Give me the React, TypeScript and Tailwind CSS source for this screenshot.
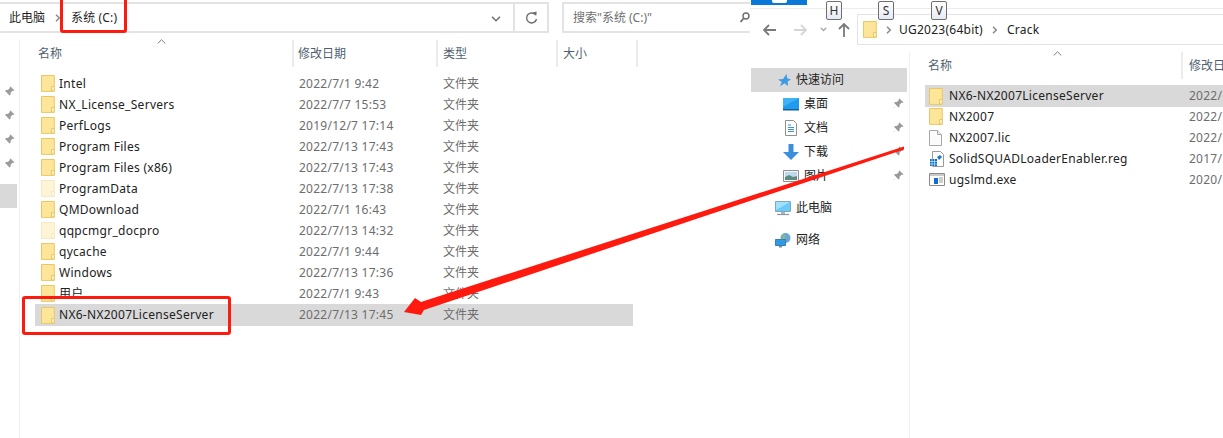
import React from "react";

const FONT = "[font-family:'Noto_Sans','Noto_Sans_CJK_SC',sans-serif]";

function Folder({ faded = false }: { faded?: boolean }) {
  return (
    <svg width="14" height="17" viewBox="0 0 14 17" className={faded ? "opacity-40 shrink-0" : "shrink-0"}>
      <path d="M.5.5h12.8v15.9H.5z" fill="#fde69a" stroke="#e9c766" />
      <path d="M10.5 16V11.5h2.8V16z" fill="#fff3c4" stroke="#e9c766" />
    </svg>
  );
}

function FileIcon() {
  return (
    <svg width="13" height="16" viewBox="0 0 13 16" className="shrink-0">
      <path d="M.5.5h8l4 4v11H.5z" fill="#fbfbfb" stroke="#a8a8a8" />
      <path d="M8.5.5v4h4" fill="#eee" stroke="#a8a8a8" />
    </svg>
  );
}

function RegIcon() {
  return (
    <svg width="16" height="16" viewBox="0 0 16 16" className="shrink-0">
      <path d="M3.5.5h8l3 3v12h-11z" fill="#fff" stroke="#9a9a9a" />
      <path d="M8 6l3-2 2 2-3 3z" fill="#1c78c8" />
      <path d="M1 8h7v7H1z" fill="#0f6cbd" />
      <path d="M3 8v7M5.500 8v7M1 10.500h7M1 13h7" stroke="#cfe6f8" strokeWidth=".7" />
    </svg>
  );
}

function ExeIcon() {
  return (
    <svg width="16" height="13" viewBox="0 0 16 13" className="shrink-0">
      <path d="M.5.500h15v12H.5z" fill="#fff" stroke="#8a8a8a" />
      <path d="M1 1h14v2H1z" fill="#c9c9c9" />
      <path d="M5 5h4v6H5z" fill="#0f6cd0" />
      <path d="M10 5h4M10 7h4M10 9h4" stroke="#9a9a9a" />
    </svg>
  );
}

function Pin() {
  return (
    <svg width="11" height="11" viewBox="0 0 11 11" className="shrink-0">
      <path d="M6.500.5l4 4-1 .6-1-.3-2 2 .1 2-.9.8L3.300 7.200.7 10.300l-.2-.2 3-2.800L1.100 4.900l.8-.9 2 .1 2-2-.2-1z" fill="#9a9a9a" />
    </svg>
  );
}

function Chevron() {
  return (
    <svg width="6" height="8" viewBox="0 0 6 8" className="shrink-0">
      <path d="M1 .8L4.300 4 1 7.200" fill="none" stroke="#8a8a8a" strokeWidth="1.500" />
    </svg>
  );
}

function Caret() {
  return (
    <svg width="9" height="5" viewBox="0 0 9 5" className="shrink-0">
      <path d="M.7 4.500L4.500.8l3.800 3.700" fill="none" stroke="#7a7a7a" strokeWidth="1" />
    </svg>
  );
}

const leftRows: [string, string, boolean?][] = [
  ["Intel", "2022/7/1 9:42"],
  ["NX_License_Servers", "2022/7/7 15:53"],
  ["PerfLogs", "2019/12/7 17:14"],
  ["Program Files", "2022/7/13 17:43"],
  ["Program Files (x86)", "2022/7/13 17:43"],
  ["ProgramData", "2022/7/13 17:38", true],
  ["QMDownload", "2022/7/1 16:43"],
  ["qqpcmgr_docpro", "2022/7/13 14:32", true],
  ["qycache", "2022/7/1 9:44"],
  ["Windows", "2022/7/13 17:36"],
  ["用户", "2022/7/1 9:43"],
];

function LeftPane() {
  return (
    <div className="w-[750px] shrink-0 h-full flex flex-col">
      <div className="mt-[2px] h-[31px] flex border-t-2 border-b-2 border-[#e3e3e3] shrink-0">
        <div className="w-[515px] flex items-center pl-[9px] text-[12px] text-[#1f1f1f] border-r-2 border-[#e3e3e3] relative">
          <span>此电脑</span>
          <span className="ml-[10px] mr-[10px]"><Chevron /></span>
          <span className="tracking-[0.15px]">系统 (C:)</span>
          <svg width="10" height="6" viewBox="0 0 10 6" className="absolute right-[12px] top-[12px]">
            <path d="M1 .8l4 4 4-4" fill="none" stroke="#6f6f6f" strokeWidth="1.500" />
          </svg>
        </div>
        <div className="w-[34px] flex items-center justify-center border-r-2 border-[#e3e3e3]">
          <svg width="13" height="14" viewBox="0 0 13 14">
            <path d="M10.800 4.200A5 5 0 1 0 11.500 8" fill="none" stroke="#6f6f6f" strokeWidth="1.400" />
            <path d="M7.500 1.500l3.800 3 .4-4z" fill="#6f6f6f" />
          </svg>
        </div>
        <div className="w-[13px] bg-white -my-[2px]" />
        <div className="flex-1 border-l-2 border-[#e3e3e3] flex items-center pl-[9px] text-[12px] text-[#6f6f6f] relative">
          <span>搜索"系统 (C:)"</span>
          <svg width="10" height="12" viewBox="0 0 10 12" className="absolute right-0 top-[8px]">
            <circle cx="6" cy="4" r="3" fill="none" stroke="#6f6f6f" strokeWidth="1.400" />
            <path d="M3.500 6.500L.5 10" stroke="#6f6f6f" strokeWidth="1.800" />
          </svg>
        </div>
      </div>
      <div className="flex flex-1 pt-[7px]">
        <div className="w-[20px] shrink-0 border-r border-[#f0f0f0] flex flex-col">
          <div className="flex flex-col gap-[13px] pl-[4px] pt-[46px]">
            <Pin /><Pin /><Pin /><Pin />
          </div>
          <div className="mt-[15px] h-[24px] w-[17px] bg-[#d9d9d9]" />
        </div>
        <div className="flex-1 flex flex-col">
          <div className="h-[27px] flex text-[12px] text-[#4f5f70] relative shrink-0">
            <span className="absolute left-[137px] -top-[1px]"><Caret /></span>
            <div className="w-[274px] border-r-2 border-[#ececec] pl-[18px] flex items-center">名称</div>
            <div className="w-[144px] border-r-2 border-[#ececec] pl-[4px] flex items-center">修改日期</div>
            <div className="w-[120px] border-r-2 border-[#ececec] pl-[5px] flex items-center">类型</div>
            <div className="w-[80px] border-r-2 border-[#ececec] pl-[5px] flex items-center">大小</div>
          </div>
          <div className="flex flex-col pt-[6px] pl-[15px]">
            {leftRows.map(([name, date, faded]) => (
              <div key={name} className="h-[21px] flex items-center text-[12px]">
                <div className="w-[257px] flex items-center pl-[6px] gap-[4px] text-[#222]">
                  <Folder faded={faded} />
                  <span className="tracking-[0.28px]">{name}</span>
                </div>
                <div className="w-[151px] pl-[7px] text-[#6d6d6d] tracking-[0.25px]">{date}</div>
                <div className="text-[#6d6d6d]">文件夹</div>
              </div>
            ))}
            <div className="h-[22px] w-[598px] bg-[#d9d9d9] flex items-center text-[12px]">
              <div className="w-[257px] flex items-center pl-[6px] gap-[4px] text-[#222]">
                <Folder />
                <span className="tracking-[0.28px]">NX6-NX2007LicenseServer</span>
              </div>
              <div className="w-[151px] pl-[7px] text-[#6d6d6d] tracking-[0.25px]">2022/7/13 17:45</div>
              <div className="text-[#6d6d6d]">文件夹</div>
            </div>
          </div>
        </div>
      </div>
    </div>
  );
}

const rightRows: [React.ReactNode, string, string][] = [
  [<Folder />, "NX6-NX2007LicenseServer", "2022/"],
  [<Folder />, "NX2007", "2022/"],
  [<FileIcon />, "NX2007.lic", "2022/"],
  [<RegIcon />, "SolidSQUADLoaderEnabler.reg", "2017/"],
  [<ExeIcon />, "ugslmd.exe", "2020/"],
];

function Monitor() {
  return (
    <svg width="16" height="13" viewBox="0 0 16 13">
      <path d="M0 0h16v11H0z" fill="#1e9bf0" />
      <path d="M0 0h16L0 9z" fill="#3db2f7" />
      <path d="M0 11h16v1.500H0z" fill="#155e96" />
    </svg>
  );
}
function Doc() {
  return (
    <svg width="12" height="16" viewBox="0 0 12 16">
      <path d="M.5.500h8l3 3v12H.5z" fill="#fff" stroke="#8f8f8f" />
      <path d="M3 5h3M3 7.500h6M3 9.500h6M3 11.500h6" stroke="#3f8fd0" />
    </svg>
  );
}
function Down() {
  return (
    <svg width="16" height="16" viewBox="0 0 16 16">
      <path d="M5.500 0h5v8H16l-8 8-8-8h5.500z" fill="#3a8fdc" />
    </svg>
  );
}
function Pic() {
  return (
    <svg width="16" height="12" viewBox="0 0 16 12">
      <path d="M.5.500h15v11H.5z" fill="#f4f7fa" stroke="#8f8f8f" />
      <path d="M2 2h12v5H2z" fill="#bcd9ee" />
      <path d="M2 7l4-2 4 2 4-1v4H2z" fill="#5e8a80" />
    </svg>
  );
}
function Computer() {
  return (
    <svg width="16" height="15" viewBox="0 0 16 15">
      <path d="M.5.500h15v10H.5z" fill="#6ccaf6" stroke="#7fa8c0" />
      <path d="M1 1h14L1 9z" fill="#9fe0fb" />
      <path d="M6 11h4v2H6z" fill="#b0b8bf" />
      <path d="M2 13.500h12" stroke="#8a949c" strokeWidth="1.200" />
    </svg>
  );
}
function Network() {
  return (
    <svg width="17" height="15" viewBox="0 0 17 15">
      <circle cx="10.500" cy="5" r="5" fill="#6aa6d8" />
      <path d="M8 1c2 1 3 2 2 4s-3 1-4 2" fill="#7fbf7a" />
      <path d="M.5 6.500h10v6H.5z" fill="#2e9be6" stroke="#3d7db0" />
      <path d="M4 13h3v1.500H4z" fill="#7a8a96" />
    </svg>
  );
}
function Star() {
  return (
    <svg width="13" height="13" viewBox="0 0 13 13">
      <path d="M8.500 0l.7 4.200L13 5.500l-3.300 2 .3 4.500-3.500-2.800L2 12.500l1.800-4.500L0 5.500l5-.5z" fill="#3f9be0" />
    </svg>
  );
}

const quick: [React.ReactNode, string][] = [
  [<Monitor />, "桌面"],
  [<Doc />, "文档"],
  [<Down />, "下载"],
  [<Pic />, "图片"],
];

function KeyTip({ k }: { k: string }) {
  return (
    <div className="w-[16px] h-[19px] border border-[#6f6f6f] rounded-[2px] bg-gradient-to-b from-white to-[#e6eaf4] text-[12px] text-[#333] flex items-center justify-center leading-none">
      {k}
    </div>
  );
}

function RightPane() {
  return (
    <div className="flex-1 h-full flex flex-col relative">
      <div className="h-[9px] shrink-0 border-b border-[#ececec]">
        <div className="ml-[1px] w-[56px] h-[5px] bg-[#0a78d6] relative">
          <div className="absolute left-[21px] top-0 w-[15px] h-[3px] bg-white rounded-b-[2px]" />
        </div>
      </div>
      <div className="h-[31px] mt-[5px] shrink-0 flex">
        <div className="w-[107px] shrink-0 flex items-center text-[#7a7a7a] relative">
          <svg width="14" height="12" viewBox="0 0 14 12" className="absolute left-[13px] top-[10px]">
            <path d="M6 1L1 6l5 5M1 6h12" fill="none" stroke="#7a7a7a" strokeWidth="1.800" />
          </svg>
          <svg width="14" height="12" viewBox="0 0 14 12" className="absolute left-[43px] top-[10px]">
            <path d="M8 1l5 5-5 5M13 6H1" fill="none" stroke="#d5d5d5" strokeWidth="1.800" />
          </svg>
          <svg width="7" height="5" viewBox="0 0 7 5" className="absolute left-[70px] top-[13px]">
            <path d="M.8.800L3.500 3.500 6.200.800" fill="none" stroke="#a5a5a5" strokeWidth="1.300" />
          </svg>
          <svg width="12" height="14" viewBox="0 0 12 14" className="absolute left-[88px] top-[9px]">
            <path d="M1 6l5-5 5 5M6 1v13" fill="none" stroke="#7a7a7a" strokeWidth="1.800" />
          </svg>
        </div>
        <div className="flex-1 border-t border-b border-l border-[#e3e3e3] flex items-center pl-[5px] text-[12px] text-[#222] tracking-[0.25px]">
          <Folder />
          <span className="ml-[9px] mr-[7px]"><Chevron /></span>
          <span>UG2023(64bit)</span>
          <span className="ml-[9px] mr-[9px]"><Chevron /></span>
          <span>Crack</span>
        </div>
      </div>
      <div className="flex flex-1 pt-[7px]">
        <div className="w-[160px] shrink-0 border-r border-[#f0f0f0] flex flex-col text-[12px] text-[#222]">
          <div className="mt-[16px] ml-[1px] w-[156px] h-[24px] bg-[#d9d9d9] flex items-center pl-[27px] gap-[5px]">
            <Star />
            <span>快速访问</span>
          </div>
          <div className="flex flex-col">
            {quick.map(([icon, label]) => (
              <div key={label} className="h-[24px] flex items-center relative">
                <div className="w-[16px] ml-[33px] flex justify-center">{icon}</div>
                <span className="ml-[5px]">{label}</span>
                <span className="absolute left-[143px] top-[6px]"><Pin /></span>
              </div>
            ))}
          </div>
          <div className="h-[24px] mt-[8px] flex items-center pl-[25px] gap-[5px]">
            <Computer />
            <span>此电脑</span>
          </div>
          <div className="h-[24px] mt-[8px] flex items-center pl-[25px] gap-[4px]">
            <Network />
            <span>网络</span>
          </div>
        </div>
        <div className="flex-1 flex flex-col pl-[15px] min-w-0">
          <div className="h-[27px] flex text-[12px] text-[#4f5f70] relative shrink-0">
            <span className="absolute left-[128px] -top-[1px]"><Caret /></span>
            <div className="w-[258px] shrink-0 border-r-2 border-[#ececec] pl-[3px] flex items-center">名称</div>
            <div className="pl-[6px] flex items-center whitespace-nowrap">修改日期</div>
          </div>
          <div className="flex flex-col pt-[6px] text-[12px]">
            {rightRows.map(([icon, name, date], i) => (
              <div key={name} className={i === 0 ? "h-[22px] -mb-[1px] flex items-center bg-[#d9d9d9]" : "h-[21px] flex items-center"}>
                <div className="w-[264px] shrink-0 flex items-center text-[#222]">
                  <div className="w-[24px] pl-[4px] flex items-center">{icon}</div>
                  <span className="tracking-[0.28px]">{name}</span>
                </div>
                <div className="text-[#6d6d6d] tracking-[0.25px]">{date}</div>
              </div>
            ))}
          </div>
        </div>
      </div>
      <div className="absolute left-[76px] top-[1px]"><KeyTip k="H" /></div>
      <div className="absolute left-[128px] top-[1px]"><KeyTip k="S" /></div>
      <div className="absolute left-[181px] top-[1px]"><KeyTip k="V" /></div>
    </div>
  );
}

export default function App() {
  return (
    <div className={`relative w-[1223px] h-[438px] overflow-hidden bg-white flex ${FONT}`}>
      <LeftPane />
      <RightPane />
      <div className="absolute left-[60px] -top-[4px] w-[67px] h-[37px] border-[3px] border-[#ff1a10] rounded-[3px]" />
      <div className="absolute left-[22px] top-[296px] w-[209px] h-[39px] border-[3px] border-[#ff1a10] rounded-[3px]" />
      <svg width="1223" height="438" viewBox="0 0 1223 438" className="absolute left-0 top-0 pointer-events-none">
        <path d="M904 146.500L421 302L415 298L404 312L421 315L424 310L904 149.500z" fill="#ff1a10" />
      </svg>
    </div>
  );
}
